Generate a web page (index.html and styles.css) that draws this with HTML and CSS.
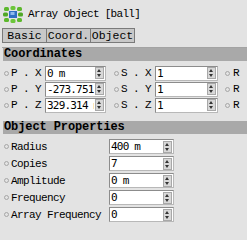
FILE: index.html
```html
<!DOCTYPE html>
<html lang="en">
<head>
    <meta charset="UTF-8">
    <meta name="viewport" content="width=device-width, initial-scale=1.0">
    <title>Array Object [ball]</title>
    <link rel="stylesheet" href="styles.css">
</head>
<body>
    <div class="panel">
        <div class="title">
            <svg class="title-icon" width="20" height="17" viewBox="0 0 20 17">
                <rect x="1" y="1" width="5" height="4" rx="1.5" fill="#5cb82c"/>
                <rect x="7.5" y="0" width="5" height="4" rx="1.5" fill="#6cc63a"/>
                <rect x="14" y="1" width="5" height="4" rx="1.5" fill="#5cb82c"/>
                <rect x="0" y="6.5" width="5" height="4" rx="1.5" fill="#4fa826"/>
                <rect x="15" y="6.5" width="5" height="4" rx="1.5" fill="#4fa826"/>
                <rect x="1" y="12" width="5" height="4" rx="1.5" fill="#5cb82c"/>
                <rect x="7.5" y="13" width="5" height="4" rx="1.5" fill="#6cc63a"/>
                <rect x="14" y="12" width="5" height="4" rx="1.5" fill="#5cb82c"/>
                <rect x="6" y="5" width="8" height="7" fill="#2f6fc4"/>
                <rect x="7.5" y="6" width="4" height="3" fill="#8fb9ee"/>
            </svg>
            <span>Array Object [ball]</span>
        </div>

        <div class="tabs">
            <button class="tab">Basic</button>
            <button class="tab">Coord.</button>
            <button class="tab">Object</button>
        </div>

        <div class="section-head">Coordinates</div>
        <div class="coord-row">
            <span class="dot"></span><span class="lbl">P . X</span>
            <div class="field"><span class="val">0 m</span><span class="spin"></span></div>
            <span class="dot dot-gap"></span><span class="lbl">S . X</span>
            <div class="field field-wide"><span class="val">1</span><span class="spin"></span></div>
            <span class="dot dot-gap-r"></span><span class="lbl-r">R</span>
        </div>
        <div class="coord-row">
            <span class="dot"></span><span class="lbl">P . Y</span>
            <div class="field"><span class="val">-273.751</span><span class="spin"></span></div>
            <span class="dot dot-gap"></span><span class="lbl">S . Y</span>
            <div class="field field-wide"><span class="val">1</span><span class="spin"></span></div>
            <span class="dot dot-gap-r"></span><span class="lbl-r">R</span>
        </div>
        <div class="coord-row">
            <span class="dot"></span><span class="lbl">P . Z</span>
            <div class="field"><span class="val">329.314 m</span><span class="spin"></span></div>
            <span class="dot dot-gap"></span><span class="lbl">S . Z</span>
            <div class="field field-wide"><span class="val">1</span><span class="spin"></span></div>
            <span class="dot dot-gap-r"></span><span class="lbl-r">R</span>
        </div>

        <div class="section-head section-gap">Object Properties</div>
        <div class="prop-list">
            <div class="prop-row">
                <span class="dot"></span><span class="prop-lbl">Radius</span>
                <div class="field field-prop"><span class="val">400 m</span><span class="spin"></span></div>
            </div>
            <div class="prop-row">
                <span class="dot"></span><span class="prop-lbl">Copies</span>
                <div class="field field-prop"><span class="val">7</span><span class="spin"></span></div>
            </div>
            <div class="prop-row">
                <span class="dot"></span><span class="prop-lbl">Amplitude</span>
                <div class="field field-prop"><span class="val">0 m</span><span class="spin"></span></div>
            </div>
            <div class="prop-row">
                <span class="dot"></span><span class="prop-lbl">Frequency</span>
                <div class="field field-prop"><span class="val">0</span><span class="spin"></span></div>
            </div>
            <div class="prop-row">
                <span class="dot"></span><span class="prop-lbl">Array Frequency</span>
                <div class="field field-prop"><span class="val">0</span><span class="spin"></span></div>
            </div>
        </div>
    </div>
</body>
</html>
```

FILE: styles.css
```css
body {
    margin: 0;
    background-color: #e3e3e3;
    font-family: 'Liberation Mono', 'DejaVu Sans Mono', monospace;
    color: #000;
}

.panel {
    width: 247px;
    height: 240px;
    overflow: hidden;
}

.title {
    display: flex;
    align-items: center;
    gap: 5px;
    height: 20px;
    padding: 4px 0 0 3px;
    font-size: 11px;
    letter-spacing: -0.7px;
}

.title-icon {
    flex: none;
}

.tabs {
    display: flex;
    margin: 4px 0 0 2px;
    padding-bottom: 4px;
    border-bottom: 1px solid #a3a3a3;
}

.tab {
    width: 45px;
    height: 15px;
    padding: 0;
    margin: 0 0 0 -1px;
    background-color: #c8c8c8;
    border: 1px solid #7a7a7a;
    font-family: 'Liberation Mono', monospace;
    font-size: 11.5px;
    color: #000;
    line-height: 13px;
}

.tab:first-child {
    margin-left: 0;
}

.section-head {
    margin: 0 0 0 3px;
    height: 13px;
    line-height: 13px;
    padding-left: 1px;
    background-color: #a9a9a9;
    font-weight: bold;
    font-size: 12px;
    letter-spacing: -0.1px;
}

.section-gap {
    margin-top: 8px;
}

.coord-row {
    display: flex;
    align-items: center;
    height: 16px;
    padding-left: 4px;
    font-size: 11px;
    letter-spacing: -0.6px;
}

.section-head + .coord-row {
    margin-top: 4px;
}

.dot {
    flex: none;
    width: 3px;
    height: 3px;
    border: 1px solid #a6a6a6;
    border-radius: 50%;
}

.dot-gap {
    margin-left: 8px;
}

.dot-gap-r {
    margin-left: 7px;
}

.lbl {
    width: 36px;
    padding-left: 2px;
    box-sizing: border-box;
}

.lbl-r {
    padding-left: 3px;
}

.field {
    flex: none;
    display: flex;
    align-items: center;
    gap: 1px;
    width: 61px;
    height: 15px;
    box-sizing: border-box;
    background-color: #fff;
    border: 1px solid #8c8c8c;
    border-right-color: #b8b8b8;
    border-bottom-color: #b8b8b8;
    padding: 0 1px 0 1px;
}

.field-wide {
    width: 63px;
}

.val {
    flex: 1;
    min-width: 0;
    font-family: 'DejaVu Sans Mono', monospace;
    font-size: 11px;
    letter-spacing: -0.8px;
    white-space: nowrap;
    overflow: hidden;
}

.spin {
    flex: none;
    position: relative;
    width: 7px;
    height: 10px;
    background-color: #d8d8d8;
    border: 1px solid #a8a8a8;
}

.spin::before,
.spin::after {
    content: "";
    position: absolute;
    left: 1px;
    border-left: 2.5px solid transparent;
    border-right: 2.5px solid transparent;
}

.spin::before {
    top: 1px;
    border-bottom: 3px solid #333;
}

.spin::after {
    bottom: 1px;
    border-top: 3px solid #333;
}

.prop-list {
    display: flex;
    flex-direction: column;
    gap: 2px;
    margin-top: 5px;
}

.prop-row {
    display: flex;
    align-items: center;
    height: 15px;
    padding-left: 4px;
    font-size: 11px;
    letter-spacing: -0.6px;
}

.prop-lbl {
    width: 98px;
    padding-left: 2px;
}

.field-prop {
    width: 65px;
}
```
